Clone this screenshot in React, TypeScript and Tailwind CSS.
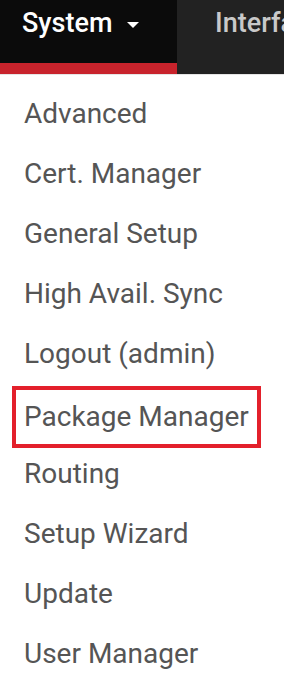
export default function App() {
  const items = [
    "Advanced",
    "Cert. Manager",
    "General Setup",
    "High Avail. Sync",
    "Logout (admin)",
    "Package Manager",
    "Routing",
    "Setup Wizard",
    "Update",
    "User Manager",
  ];

  return (
    <div className="w-[284px] h-[682px] overflow-hidden bg-white" style={{ fontFamily: "Roboto, 'Liberation Sans', sans-serif" }}>
      {/* Navbar */}
      <div className="flex h-[75px] bg-[#222222] border-b border-[#e5e5e5]">
        <div className="w-[177px] flex flex-col bg-[#0b0b0b]">
          <div className="flex-1 flex items-center pl-[22px] pb-[16px] gap-[15px] text-white text-[27px] font-medium">
            <span>System</span>
            <span className="w-0 h-0 border-l-[6px] border-r-[6px] border-t-[6px] border-l-transparent border-r-transparent border-t-white mt-[2px]" />
          </div>
          <div className="h-[11px] bg-[#c8232c]" />
        </div>
        <div className="flex-1 flex flex-col overflow-hidden">
          <div className="h-[63px] flex items-center pl-[38px] pb-[16px] text-[27px] text-[#c9c9c9] font-medium whitespace-nowrap">
            Interfaces
          </div>
        </div>
      </div>

      {/* Dropdown */}
      <ul className="pt-[9px]">
        {items.map((item) =>
          item === "Package Manager" ? (
            <li key={item} className="h-[60px] flex items-center pl-[12px]">
              <span className="flex items-center h-[62px] w-[249px] pl-[8px] mt-[6px] border-[4px] border-[#e3202b] text-[28px] text-[#555555] whitespace-nowrap">
                {item}
              </span>
            </li>
          ) : (
            <li key={item} className="h-[60px] flex items-center pl-[24px] text-[28px] text-[#555555] whitespace-nowrap">
              {item}
            </li>
          )
        )}
      </ul>
    </div>
  );
}
